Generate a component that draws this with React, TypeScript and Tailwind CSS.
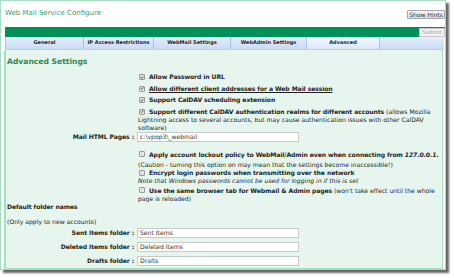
import React from 'react';

const CheckBox = ({ checked }: { checked: boolean }) => (
  <span className="inline-flex items-center justify-center w-[6px] h-[6px] ml-[1px] mr-[4px] align-[-0.5px] bg-[#e3e3e3] border border-[#9a9a9a] rounded-[1px]">
    {checked && (
      <svg viewBox="0 0 6 6" className="w-[5px] h-[5px]">
        <path d="M1 3 L2.4 4.5 L5 1.2" fill="none" stroke="#222" strokeWidth={1.1} />
      </svg>
    )}
  </span>
);

const Field = ({ label, value, className }: { label: string; value: string; className: string }) => (
  <div className={`flex items-center h-[10px] ${className}`}>
    <div className="w-[127px] text-right font-bold tracking-[-0.1px] whitespace-nowrap">{label}</div>
    <div className="ml-[3px] w-[162px] h-[10px] bg-white border border-[#c9c9c9] pl-[2px] leading-[8px] text-[#333] whitespace-nowrap">
      {value}
    </div>
  </div>
);

export default function App() {
  const tabs = [
    { label: 'General', w: 'w-[78px]' },
    { label: 'IP Access Restrictions', w: 'w-[70px]' },
    { label: 'WebMail Settings', w: 'w-[77px]' },
    { label: 'WebAdmin Settings', w: 'w-[76px]' },
    { label: 'Advanced', w: 'w-[73px]', active: true },
    { label: '', w: 'flex-1' },
  ];

  return (
    <div className="w-[454px] h-[278px] bg-white overflow-hidden font-['DejaVu_Sans',sans-serif] text-[#1e1e1e]">
      <div className="w-[446px] h-[270px] border border-[#a9dcc0] shadow-[3px_3px_2px_rgba(0,0,0,0.6)] flex flex-col bg-white">
        {/* header */}
        <div className="h-[26px] flex justify-between">
          <div className="mt-[8px] ml-[4px] text-[7px] leading-[8px] text-[#3a9a6a]">Web Mail Service Configure</div>
          <button className="mt-[9px] h-[9px] w-[38px] bg-gradient-to-b from-[#f6f6f6] to-[#dcdcdc] border border-[#a8a8a8] rounded-[1px] text-[6px] leading-[7px] text-[#333] whitespace-nowrap">
            Show Hints
          </button>
        </div>

        {/* green bar */}
        <div className="h-[10px] ml-[4px] bg-[#00905a] flex justify-end items-center">
          <button className="h-[9px] w-[26px] bg-[#f2f2f2] border border-[#c8c8c8] text-[5.5px] leading-[7px] text-[#a5a5a5]">Submit</button>
        </div>

        {/* tabs */}
        <div className="h-[13px] ml-[4px] mr-[1px] flex border-b border-[#b7d9c8]">
          {tabs.map((t, i) => (
            <div
              key={i}
              className={`${t.w} h-full flex items-center justify-center border-l border-[#a9c4e6] text-[5px] font-bold whitespace-nowrap ${
                t.active ? 'bg-gradient-to-b from-[#f3f8fe] to-[#dbe8fa]' : 'bg-gradient-to-b from-[#e6effc] to-[#c9dbf5]'
              }`}
            >
              {t.label}
            </div>
          ))}
        </div>

        {/* content */}
        <div className="flex-1 ml-[3px] mr-[2px] bg-[#e6f5ee] border-l-2 border-r border-b border-[#a9dcc0] text-[6.1px] leading-[8px] pl-[1px]">
          <div className="mt-[6px] h-[12px] leading-[12px] text-[7.6px] font-bold text-[#2a8a55]">Advanced Settings</div>

          <div className="ml-[131px] mt-[5px] whitespace-nowrap">
            <div className="font-bold tracking-[-0.1px]"><CheckBox checked />Allow Password in URL</div>
            <div className="mt-[3.5px] font-bold tracking-[-0.1px] underline"><CheckBox checked />Allow different client addresses for a Web Mail session</div>
            <div className="mt-[3.5px] font-bold tracking-[-0.1px]"><CheckBox checked />Support CalDAV scheduling extension</div>
            <div className="mt-[3.5px]">
              <span className="font-bold tracking-[-0.1px]"><CheckBox checked />Support different CalDAV authentication realms for different accounts</span> (allows Mozilla
              <br />
              Lightning access to several accounts, but may cause authentication issues with other CalDAV
              <br />
              software)
            </div>
          </div>

          <Field label="Mail HTML Pages :" value="c:\vpop3\_webmail" className="mt-0" />

          <div className="ml-[131px] mt-[9px] whitespace-nowrap">
            <div>
              <span className="font-bold tracking-[-0.1px]"><CheckBox checked={false} />Apply account lockout policy to WebMail/Admin even when connecting from <i>127.0.0.1</i>.</span>
              <div className="mt-[2px]">(Caution - turning this option on may mean that the settings become inaccessible!)</div>
            </div>
            <div className="mt-[0.5px]">
              <span className="font-bold tracking-[-0.1px]"><CheckBox checked={false} />Encrypt login passwords when transmitting over the network</span>
              <div className="italic">Note that Windows passwords cannot be used for logging in if this is set</div>
            </div>
            <div className="mt-[1.5px]">
              <span className="font-bold tracking-[-0.1px]"><CheckBox checked={false} />Use the same browser tab for Webmail &amp; Admin pages</span> (won't take effect until the whole
              <br />
              page is reloaded)
            </div>
          </div>

          <div className="mt-0 font-bold tracking-[-0.1px]">Default folder names</div>
          <div className="mt-[7px]">(Only apply to new accounts)</div>

          <Field label="Sent Items folder :" value="Sent Items" className="mt-[2px]" />
          <Field label="Deleted Items folder :" value="Deleted Items" className="mt-[4px]" />
          <Field label="Drafts folder :" value="Drafts" className="mt-[4px]" />
        </div>
      </div>
    </div>
  );
}
